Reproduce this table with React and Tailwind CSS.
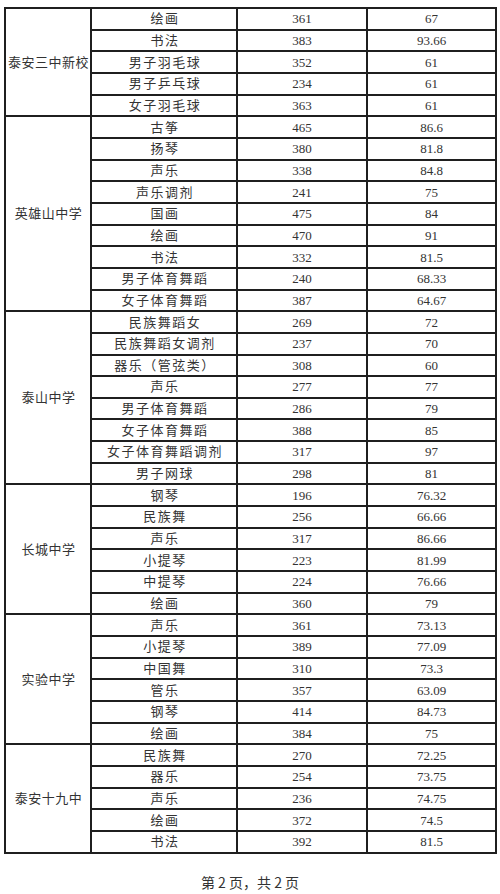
const groups = [
  {
    school: "泰安三中新校",
    rows: [
      ["绘画", "361", "67"],
      ["书法", "383", "93.66"],
      ["男子羽毛球", "352", "61"],
      ["男子乒乓球", "234", "61"],
      ["女子羽毛球", "363", "61"],
    ],
  },
  {
    school: "英雄山中学",
    rows: [
      ["古筝", "465", "86.6"],
      ["扬琴", "380", "81.8"],
      ["声乐", "338", "84.8"],
      ["声乐调剂", "241", "75"],
      ["国画", "475", "84"],
      ["绘画", "470", "91"],
      ["书法", "332", "81.5"],
      ["男子体育舞蹈", "240", "68.33"],
      ["女子体育舞蹈", "387", "64.67"],
    ],
  },
  {
    school: "泰山中学",
    rows: [
      ["民族舞蹈女", "269", "72"],
      ["民族舞蹈女调剂", "237", "70"],
      ["器乐（管弦类）", "308", "60"],
      ["声乐", "277", "77"],
      ["男子体育舞蹈", "286", "79"],
      ["女子体育舞蹈", "388", "85"],
      ["女子体育舞蹈调剂", "317", "97"],
      ["男子网球", "298", "81"],
    ],
  },
  {
    school: "长城中学",
    rows: [
      ["钢琴", "196", "76.32"],
      ["民族舞", "256", "66.66"],
      ["声乐", "317", "86.66"],
      ["小提琴", "223", "81.99"],
      ["中提琴", "224", "76.66"],
      ["绘画", "360", "79"],
    ],
  },
  {
    school: "实验中学",
    rows: [
      ["声乐", "361", "73.13"],
      ["小提琴", "389", "77.09"],
      ["中国舞", "310", "73.3"],
      ["管乐", "357", "63.09"],
      ["钢琴", "414", "84.73"],
      ["绘画", "384", "75"],
    ],
  },
  {
    school: "泰安十九中",
    rows: [
      ["民族舞", "270", "72.25"],
      ["器乐", "254", "73.75"],
      ["声乐", "236", "74.75"],
      ["绘画", "372", "74.5"],
      ["书法", "392", "81.5"],
    ],
  },
]

const cjk = "font-['Liberation_Serif','Noto_Sans_CJK_SC',serif]"

export default function App() {
  return (
    <div className="min-h-screen w-[500px] bg-white text-[#333]">
      <div className="pt-[7px] pl-[4px]">
        <table className={`w-[491px] h-[847px] table-fixed border-collapse border-2 border-[#1f1f1f] text-[13px] ${cjk}`}>
          <colgroup>
            <col className="w-[86px]" />
            <col className="w-[146px]" />
            <col className="w-[130px]" />
            <col className="w-[129px]" />
          </colgroup>
          <tbody>
            {groups.map((g) =>
              g.rows.map((r, i) => (
                <tr key={g.school + i}>
                  {i === 0 && (
                    <td
                      rowSpan={g.rows.length}
                      className="border-2 border-[#1f1f1f] pl-[1px] text-center align-middle leading-none tracking-[0.5px] whitespace-nowrap"
                    >
                      {g.school}
                    </td>
                  )}
                  <td className="border-2 border-[#1f1f1f] pl-[2px] text-center align-middle leading-none tracking-[1.5px] whitespace-nowrap">
                    {r[0]}
                  </td>
                  <td className="border-2 border-[#1f1f1f] text-center align-middle leading-none">
                    {r[1]}
                  </td>
                  <td className="border-2 border-[#1f1f1f] text-center align-middle leading-none">
                    {r[2]}
                  </td>
                </tr>
              ))
            )}
          </tbody>
        </table>
        <p className="mt-[19px] pr-[4px] text-center text-[14px] leading-[18px] text-[#333] font-['Noto_Sans_CJK_SC',sans-serif]">
          第 2 页，共 2 页
        </p>
      </div>
    </div>
  )
}
